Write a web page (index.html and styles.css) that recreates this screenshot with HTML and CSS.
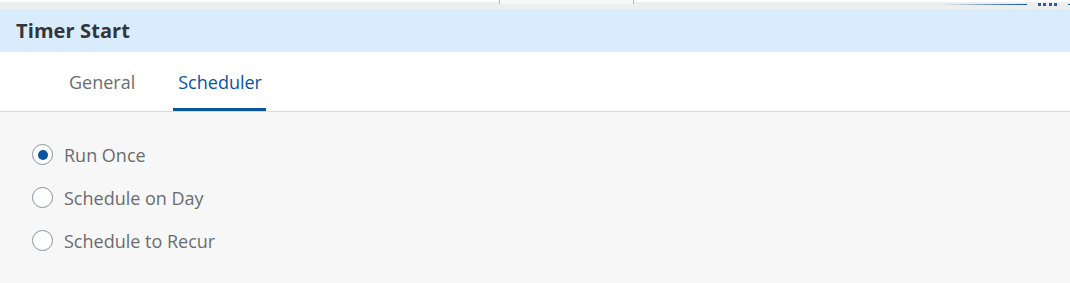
FILE: index.html
```html
<!DOCTYPE html>
<html>
<head>
<meta charset="utf-8">
<link rel="stylesheet" href="styles.css">
</head>
<body>
<div class="strip">
  <div class="stub"></div>
  <div class="strip-right">
    <div class="gradline"></div>
    <div class="dots"><span></span><span></span><span></span><span></span></div>
    <div class="tail"></div>
  </div>
</div>
<header class="titlebar"><h1 class="title">Timer Start</h1></header>
<nav class="tabs">
  <div class="tab">General</div>
  <div class="tab active">Scheduler</div>
</nav>
<main class="content">
  <label class="radio-row"><span class="radio checked"></span><span class="radio-label">Run Once</span></label>
  <label class="radio-row"><span class="radio"></span><span class="radio-label">Schedule on Day</span></label>
  <label class="radio-row"><span class="radio"></span><span class="radio-label">Schedule to Recur</span></label>
</main>
</body>
</html>
```
FILE: styles.css
```css
html, body {
  margin: 0;
  padding: 0;
  width: 1070px;
  height: 283px;
  overflow: hidden;
  font-family: "Open Sans", "Liberation Sans", sans-serif;
  background: #f7f7f7;
}
.strip {
  height: 7px;
  border-top: 2px solid #ffffff;
  background: #eeeeee;
  display: flex;
  align-items: flex-start;
}
.stub {
  margin-top: -2px;
  margin-left: 499px;
  width: 133px;
  height: 4px;
  border-left: 1px solid #b8b8b8;
  border-right: 1px solid #b8b8b8;
  background: #f8f8f8;
}
.strip-right {
  margin-left: auto;
  display: flex;
  align-items: flex-start;
}
.gradline {
  margin-top: 2px;
  width: 88px;
  height: 1px;
  background: linear-gradient(to right, rgba(10,84,160,0), #0a54a0);
}
.dots {
  margin-left: 11px;
  margin-top: 1px;
  display: flex;
  gap: 2.5px;
}
.dots span {
  width: 3px;
  height: 3px;
  background: #2a5fa8;
}
.tail {
  margin-left: 11px;
  margin-top: 2px;
  width: 2px;
  height: 1px;
  background: #0a54a0;
}
.titlebar {
  height: 43px;
  background: #d9ecfe;
  display: flex;
  align-items: center;
  padding-left: 16px;
}
.title {
  margin: 0;
  font-size: 20px;
  font-weight: 700;
  color: #32363a;
  letter-spacing: 0.1px;
}
.tabs {
  height: 60px;
  box-sizing: border-box;
  background: #ffffff;
  border-bottom: 1px solid #d9d9d9;
  display: flex;
  padding-left: 64px;
  gap: 34px;
}
.tab {
  padding: 3px 4px 0 5px;
  font-size: 18px;
  color: #6a6d70;
  display: flex;
  align-items: center;
  border-bottom: 3px solid transparent;
  box-sizing: border-box;
}
.tab.active {
  color: #0854a0;
  border-bottom-color: #0854a0;
  border-radius: 2px 2px 0 0;
}
.content {
  padding: 21px 0 0 32px;
  display: flex;
  flex-direction: column;
}
.radio-row {
  height: 43px;
  display: flex;
  align-items: center;
}
.radio {
  width: 21px;
  height: 21px;
  box-sizing: border-box;
  border: 1px solid #89919a;
  border-radius: 50%;
  background: #ffffff;
  display: flex;
  align-items: center;
  justify-content: center;
}
.radio.checked::after {
  content: "";
  width: 10px;
  height: 10px;
  border-radius: 50%;
  background: #0854a0;
}
.radio-label {
  margin-left: 11px;
  font-size: 18px;
  color: #6a6d70;
}
```
